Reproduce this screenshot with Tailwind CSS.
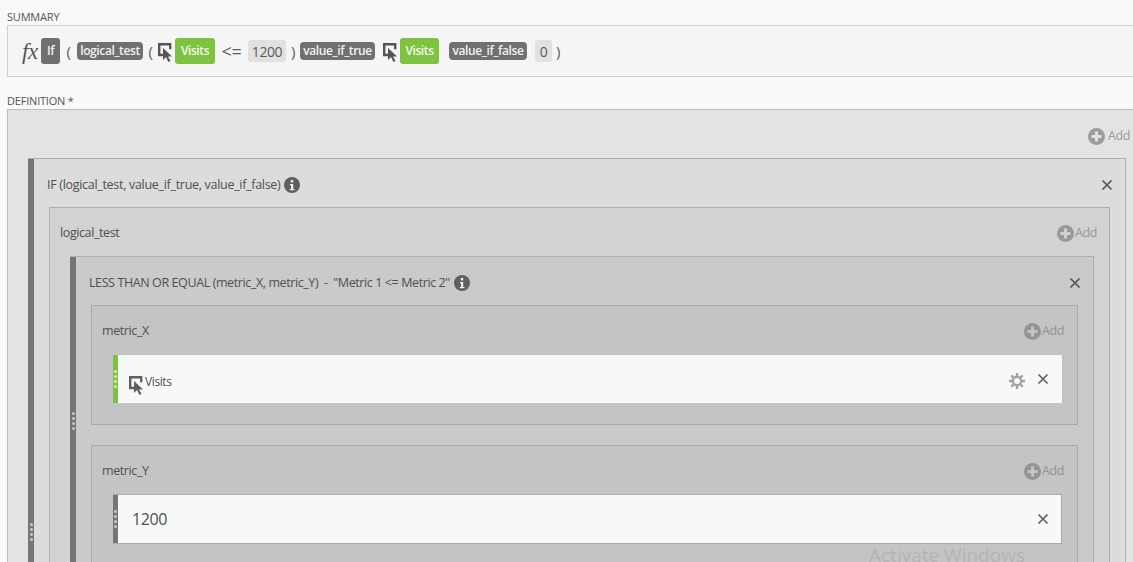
<!DOCTYPE html>
<html>
<head>
<meta charset="utf-8">
<script src="https://cdn.jsdelivr.net/npm/@tailwindcss/browser@4"></script>
</head>
<body class="font-['Open_Sans',sans-serif] tracking-[-0.4px] bg-[#f9f9f9] text-[#505050] text-[12.500px]">
<div class="relative w-[1133px] h-[562px] overflow-hidden pl-[7px]">
  <div class="h-[25px] pt-[10px] text-[11px] tracking-[-0.2px] leading-[14px] text-[#555]">SUMMARY</div>
  <div class="h-[52px] bg-[#f5f5f5] border border-r-0 border-[#cfcfcf] flex items-center pl-[14px] text-[#5a5a5a] text-[12px]">
    <span class="w-[19px] font-['Liberation_Serif',serif] italic text-[23px] leading-none text-[#555]">fx</span>
    <span class="w-[19px] h-[26px] rounded-[3px] bg-[#707070] text-[#f2f2f2] font-semibold flex items-center justify-center">If</span>
    <span class="w-[17px] text-center text-[15px]">(</span>
    <span class="w-[66px] h-[18px] rounded-[4px] bg-[#707070] text-[#f2f2f2] font-semibold flex items-center justify-center">logical_test</span>
    <span class="w-[15px] text-center text-[15px]">(</span>
    <svg class="w-[15px] h-[19px] mr-[2px] mt-[2px]" viewBox="0 0 15 19"><path d="M5 12H1.200V1.200h11v5" fill="none" stroke="#555" stroke-width="2.400"/><path d="M5 5l9 8.500h-4l2.500 4.500-2 1-2.500-5-3 3z" fill="#555"/></svg>
    <span class="w-[40px] h-[26px] rounded-[3px] bg-[#7fc241] text-[#f4f9ee] font-semibold flex items-center justify-center">Visits</span>
    <span class="w-[33px] text-center text-[18px]">&lt;=</span>
    <span class="w-[38px] h-[22px] rounded-[3px] bg-[#e1e1e1] text-[14px] flex items-center justify-center">1200</span>
    <span class="w-[14px] text-center text-[15px]">)</span>
    <span class="w-[75px] h-[18px] rounded-[4px] bg-[#707070] text-[#f2f2f2] font-semibold flex items-center justify-center">value_if_true</span>
    <svg class="w-[15px] h-[19px] ml-[8px] mr-[2px] mt-[2px]" viewBox="0 0 15 19"><path d="M5 12H1.200V1.200h11v5" fill="none" stroke="#555" stroke-width="2.400"/><path d="M5 5l9 8.500h-4l2.500 4.500-2 1-2.500-5-3 3z" fill="#555"/></svg>
    <span class="w-[39px] h-[26px] rounded-[3px] bg-[#7fc241] text-[#f4f9ee] font-semibold flex items-center justify-center">Visits</span>
    <span class="w-[78px] h-[18px] ml-[10px] rounded-[4px] bg-[#707070] text-[#f2f2f2] font-semibold flex items-center justify-center">value_if_false</span>
    <span class="w-[17px] h-[22px] ml-[8px] rounded-[3px] bg-[#e1e1e1] text-[14px] flex items-center justify-center">0</span>
    <span class="w-[12px] text-center text-[15px]">)</span>
  </div>
  <div class="h-[32px] pt-[17px] text-[11px] tracking-[-0.2px] leading-[14px] text-[#555]">DEFINITION *</div>

  <div class="bg-[#e3e3e3] border border-r-0 border-[#bdbdbd] pl-[20px] pr-[7px]">
    <div class="h-[48px] flex items-center justify-end pt-[4px] mr-[-4px] text-[#9a9a9a]">
      <svg class="w-[17px] h-[17px] mr-[3px]" viewBox="0 0 17 17"><circle cx="8.500" cy="8.500" r="8.500" fill="#9c9c9c"/><path d="M8.500 3.500v10M3.500 8.500h10" stroke="#e3e3e3" stroke-width="3"/></svg>Add
    </div>

    <div class="h-[748px] flex bg-[#dcdcdc] border border-l-0 border-[#aeaeae]">
      <div class="w-[6px] shrink-0 bg-[#757575] flex flex-col items-center justify-center gap-[2px]">
        <i class="w-[3px] h-[3px] rounded-full bg-[#c9c9c9]"></i><i class="w-[3px] h-[3px] rounded-full bg-[#c9c9c9]"></i><i class="w-[3px] h-[3px] rounded-full bg-[#c9c9c9]"></i><i class="w-[3px] h-[3px] rounded-full bg-[#c9c9c9]"></i>
      </div>
      <div class="flex-1 min-w-0 pl-[15px] pr-[15px]">
        <div class="h-[48px] pt-[4px] ml-[-2px] mr-[-3px] flex items-center">
          <span class="tracking-[-0.3px]">IF (logical_test, value_if_true, value_if_false)</span>
          <svg class="w-[16px] h-[16px] ml-[4px]" viewBox="0 0 16 16"><circle cx="8" cy="8" r="8" fill="#5f5f5f"/><rect x="6.800" y="3" width="2.400" height="2.400" fill="#eee"/><path d="M6 7h3.200v5H10.500v1.200H5.800V12H7V8.200H6z" fill="#eee"/></svg>
          <svg class="w-[12px] h-[12px] ml-auto" viewBox="0 0 12 12"><path d="M1.500 1.500l9 9M10.500 1.500l-9 9" stroke="#555" stroke-width="1.700"/></svg>
        </div>

        <div class="bg-[#d2d2d2] border border-[#aeaeae] h-[600px] pl-[20px] pr-[15px]">
          <div class="h-[48px] ml-[-10px] pt-[2px] flex items-center">
            <span>logical_test</span>
            <span class="ml-auto mr-[-3px] mt-[1px] flex items-center text-[#969696]"><svg class="w-[17px] h-[17px] mr-[1px]" viewBox="0 0 17 17"><circle cx="8.500" cy="8.500" r="8.500" fill="#989898"/><path d="M8.500 3.500v10M3.500 8.500h10" stroke="#d2d2d2" stroke-width="3"/></svg>Add</span>
          </div>

          <div class="flex bg-[#cacaca] border border-l-0 border-[#aeaeae]">
            <div class="w-[6px] shrink-0 bg-[#757575] flex flex-col items-center justify-center gap-[2px]">
              <i class="w-[3px] h-[3px] rounded-full bg-[#c9c9c9]"></i><i class="w-[3px] h-[3px] rounded-full bg-[#c9c9c9]"></i><i class="w-[3px] h-[3px] rounded-full bg-[#c9c9c9]"></i><i class="w-[3px] h-[3px] rounded-full bg-[#c9c9c9]"></i>
            </div>
            <div class="flex-1 min-w-0 pl-[15px] pr-[15px] pb-[19px]">
              <div class="h-[48px] pt-[4px] ml-[-2px] mr-[-3px] flex items-center">
                <span>LESS THAN OR EQUAL (metric_X, metric_Y) &nbsp;-&nbsp; "Metric 1 &lt;= Metric 2"</span>
                <svg class="w-[16px] h-[16px] ml-[4px]" viewBox="0 0 16 16"><circle cx="8" cy="8" r="8" fill="#5f5f5f"/><rect x="6.800" y="3" width="2.400" height="2.400" fill="#eee"/><path d="M6 7h3.200v5H10.500v1.200H5.800V12H7V8.200H6z" fill="#eee"/></svg>
                <svg class="w-[12px] h-[12px] ml-auto" viewBox="0 0 12 12"><path d="M1.500 1.500l9 9M10.500 1.500l-9 9" stroke="#555" stroke-width="1.700"/></svg>
              </div>

              <div class="flex flex-col gap-[20px]">
                <div class="h-[120px] bg-[#c4c4c4] border border-[#a9a9a9] pl-[21px] pr-[15px]">
                  <div class="h-[49px] ml-[-11px] pt-[1px] flex items-center">
                    <span>metric_X</span>
                    <span class="ml-auto mr-[-2px] mt-[1px] flex items-center text-[#929292]"><svg class="w-[17px] h-[17px] mr-[1px]" viewBox="0 0 17 17"><circle cx="8.500" cy="8.500" r="8.500" fill="#949494"/><path d="M8.500 3.500v10M3.500 8.500h10" stroke="#c4c4c4" stroke-width="3"/></svg>Add</span>
                  </div>
                  <div class="h-[48px] bg-[#f7f9f8] flex items-center">
                    <div class="w-[5px] self-stretch shrink-0 bg-[#7fc241] flex flex-col items-center justify-center gap-[2px]">
                      <i class="w-[3px] h-[3px] rounded-full bg-[#d5e9c0]"></i><i class="w-[3px] h-[3px] rounded-full bg-[#d5e9c0]"></i><i class="w-[3px] h-[3px] rounded-full bg-[#d5e9c0]"></i><i class="w-[3px] h-[3px] rounded-full bg-[#d5e9c0]"></i>
                    </div>
                    <svg class="w-[15px] h-[19px] ml-[11px] mt-[12px]" viewBox="0 0 15 19"><path d="M5 12H1.200V1.200h11v5" fill="none" stroke="#5f5f5f" stroke-width="2.400"/><path d="M5 5l9 8.500h-4l2.500 4.500-2 1-2.500-5-3 3z" fill="#5f5f5f"/></svg>
                    <span class="ml-[1px] mt-[6px] text-[12px]">Visits</span>
                    <svg class="w-[16px] h-[16px] ml-auto mt-[3px] mr-[-2px]" viewBox="0 0 16 16"><circle cx="8" cy="8" r="4.200" fill="none" stroke="#a3a3a3" stroke-width="2.400"/><path d="M8 0v3M8 13v3M0 8h3M13 8h3M2.300 2.300l2.100 2.100M11.600 11.600l2.100 2.100M2.300 13.700l2.100-2.100M11.600 4.400l2.100-2.100" stroke="#a3a3a3" stroke-width="2.400"/></svg>
                    <svg class="w-[12px] h-[12px] ml-[14px] mr-[13px]" viewBox="0 0 12 12"><path d="M1.500 1.500l9 9M10.500 1.500l-9 9" stroke="#5f5f5f" stroke-width="1.700"/></svg>
                  </div>
                </div>

                <div class="h-[120px] bg-[#c4c4c4] border border-[#a9a9a9] pl-[21px] pr-[15px]">
                  <div class="h-[48px] ml-[-11px] pt-[2px] flex items-center">
                    <span>metric_Y</span>
                    <span class="ml-auto mr-[-2px] mt-[1px] flex items-center text-[#929292]"><svg class="w-[17px] h-[17px] mr-[1px]" viewBox="0 0 17 17"><circle cx="8.500" cy="8.500" r="8.500" fill="#949494"/><path d="M8.500 3.500v10M3.500 8.500h10" stroke="#c4c4c4" stroke-width="3"/></svg>Add</span>
                  </div>
                  <div class="h-[50px] bg-[#f7f9f8] border border-l-0 border-[#aaaaaa] flex items-center">
                    <div class="w-[5px] self-stretch shrink-0 bg-[#757575] flex flex-col items-center justify-center gap-[2px]">
                      <i class="w-[3px] h-[3px] rounded-full bg-[#c9c9c9]"></i><i class="w-[3px] h-[3px] rounded-full bg-[#c9c9c9]"></i><i class="w-[3px] h-[3px] rounded-full bg-[#c9c9c9]"></i><i class="w-[3px] h-[3px] rounded-full bg-[#c9c9c9]"></i>
                    </div>
                    <span class="ml-[14px] text-[16px]">1200</span>
                    <svg class="w-[12px] h-[12px] ml-auto mr-[12px]" viewBox="0 0 12 12"><path d="M1.500 1.500l9 9M10.500 1.500l-9 9" stroke="#5f5f5f" stroke-width="1.700"/></svg>
                  </div>
                </div>
              </div>
            </div>
          </div>
        </div>
      </div>
    </div>
  </div>
  <div class="absolute left-[869px] top-[543px] text-[19px] tracking-normal leading-[24px] text-[#b4b4b4]">Activate Windows</div>
</div>
</body>
</html>
